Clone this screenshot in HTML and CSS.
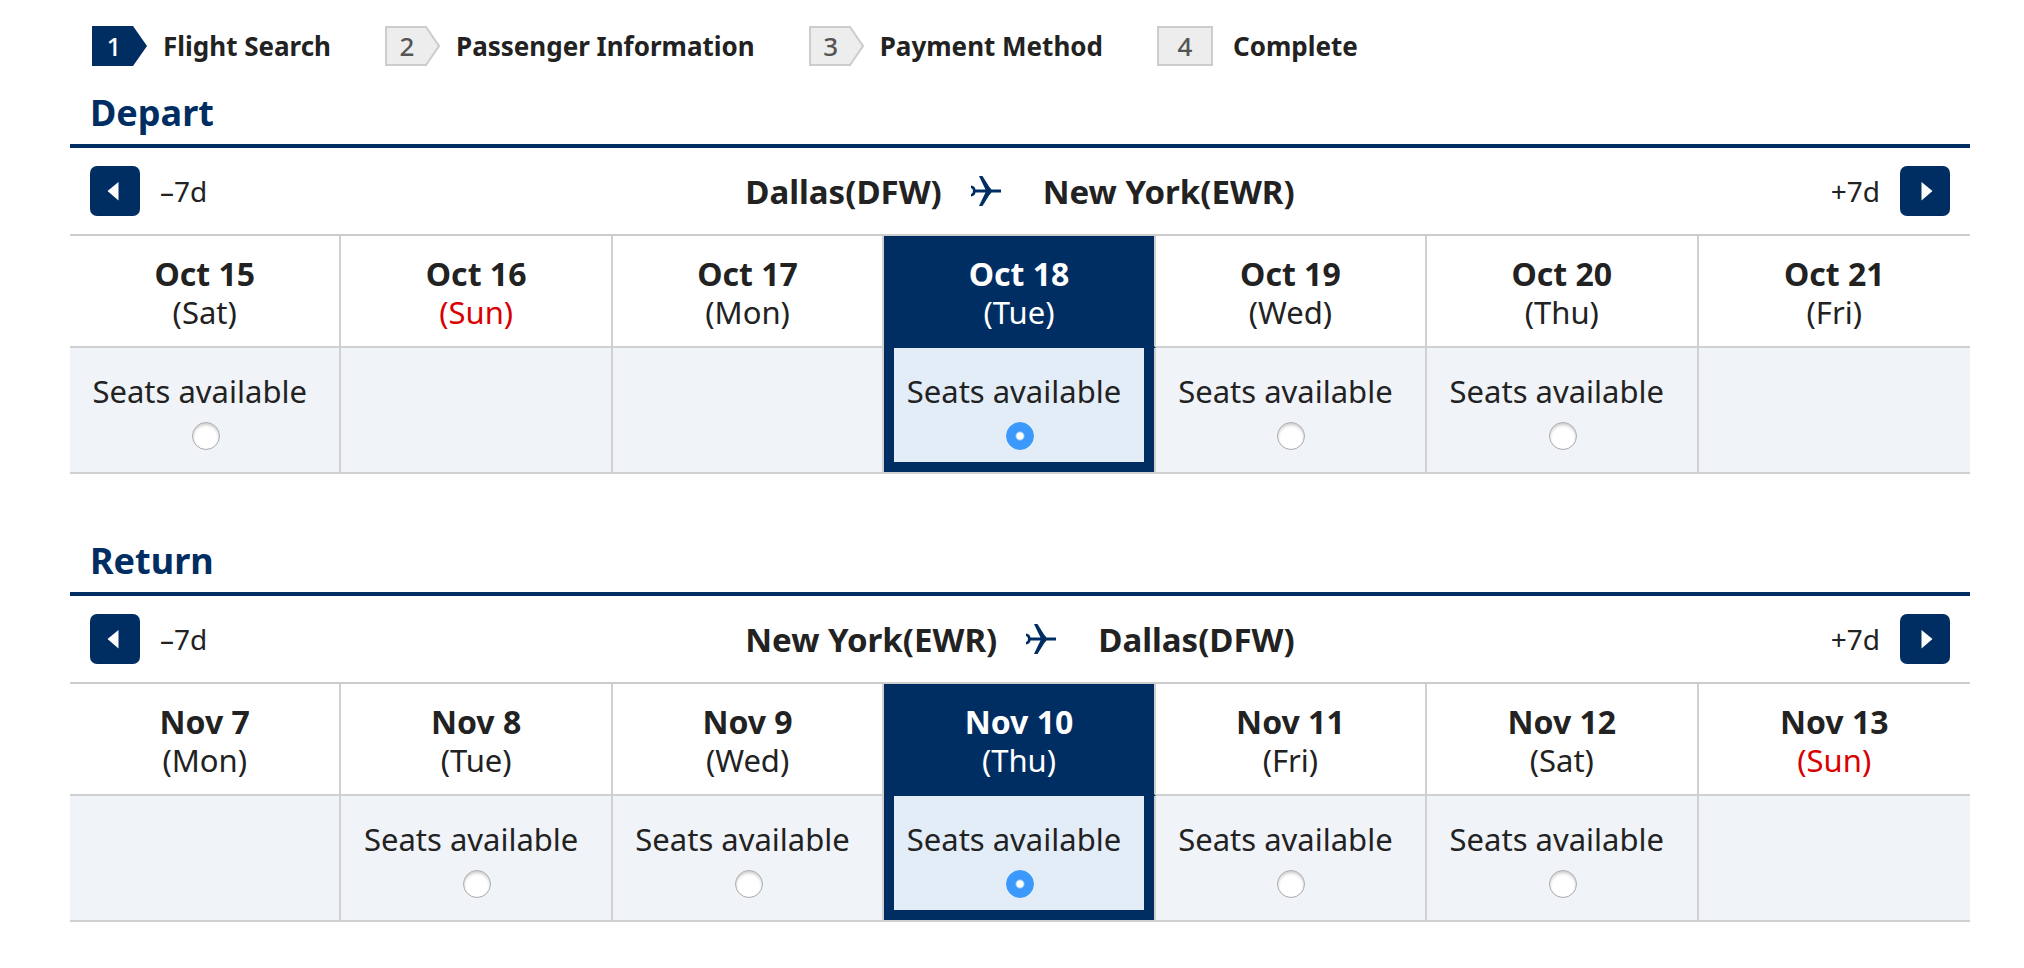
FILE: index.html
```
<!DOCTYPE html>
<html lang="en">
<head>
<meta charset="utf-8">
<title>Flight Search</title>
<link rel="stylesheet" href="styles.css">
</head>
<body>
<svg width="0" height="0" class="defs" aria-hidden="true">
  <symbol id="plane" viewBox="0 0 30 30">
    <path d="M8 0h3.500L18 10.500l2.500 3H30v3h-9.500L18 19.500 11.500 30H8l5-10.500 1.500-3H4.500Q4 20 0 20.500V18Q2 17.500 2 15T0 12V9.500Q4 10 4.500 13.500h10L13 10.500z"/>
  </symbol>
  <symbol id="arrow" viewBox="0 0 50 50"><path d="M17.500 25 28.500 16v18.500z"/></symbol>
</svg>
<main class="page">
  <ol class="steps">
    <li class="step step-current"><span class="badge"><svg viewBox="0 0 56 40"><path d="M0 0H41L55 20 41 40H0z"/></svg><b>1</b></span>Flight Search</li>
    <li class="step"><span class="badge"><svg viewBox="0 0 56 40"><path d="M1 1H41L54 20 41 39H1z"/></svg><b>2</b></span>Passenger Information</li>
    <li class="step"><span class="badge"><svg viewBox="0 0 56 40"><path d="M1 1H41L54 20 41 39H1z"/></svg><b>3</b></span>Payment Method</li>
    <li class="step step-last"><span class="badge"><svg viewBox="0 0 56 40"><path d="M1 1H55V39H1z"/></svg><b>4</b></span>Complete</li>
  </ol>

  <section class="leg">
    <h2 class="leg-title">Depart</h2>
    <div class="leg-nav">
      <div class="shift"><button class="shift-btn" id="dp" aria-label="Previous 7 days"><svg><use href="#arrow"/></svg></button><label for="dp">–7d</label></div>
      <div class="route"><span>Dallas(DFW)</span><svg class="plane"><use href="#plane"/></svg><span>New York(EWR)</span></div>
      <div class="shift shift-next"><label for="dn">+7d</label><button class="shift-btn" id="dn" aria-label="Next 7 days"><svg><use href="#arrow"/></svg></button></div>
    </div>
    <table class="days">
      <thead><tr>
        <th>Oct 15<span class="dow">(Sat)</span></th>
        <th>Oct 16<span class="dow sunday">(Sun)</span></th>
        <th>Oct 17<span class="dow">(Mon)</span></th>
        <th class="selected">Oct 18<span class="dow">(Tue)</span></th>
        <th>Oct 19<span class="dow">(Wed)</span></th>
        <th>Oct 20<span class="dow">(Thu)</span></th>
        <th>Oct 21<span class="dow">(Fri)</span></th>
      </tr></thead>
      <tbody><tr>
        <td><label class="seat"><span>Seats available</span><input type="radio" name="depart"></label></td>
        <td></td>
        <td></td>
        <td class="selected"><label class="seat"><span>Seats available</span><input type="radio" name="depart" checked></label></td>
        <td><label class="seat"><span>Seats available</span><input type="radio" name="depart"></label></td>
        <td><label class="seat"><span>Seats available</span><input type="radio" name="depart"></label></td>
        <td></td>
      </tr></tbody>
    </table>
  </section>

  <section class="leg">
    <h2 class="leg-title">Return</h2>
    <div class="leg-nav">
      <div class="shift"><button class="shift-btn" id="rp" aria-label="Previous 7 days"><svg><use href="#arrow"/></svg></button><label for="rp">–7d</label></div>
      <div class="route"><span>New York(EWR)</span><svg class="plane"><use href="#plane"/></svg><span>Dallas(DFW)</span></div>
      <div class="shift shift-next"><label for="rn">+7d</label><button class="shift-btn" id="rn" aria-label="Next 7 days"><svg><use href="#arrow"/></svg></button></div>
    </div>
    <table class="days">
      <thead><tr>
        <th>Nov 7<span class="dow">(Mon)</span></th>
        <th>Nov 8<span class="dow">(Tue)</span></th>
        <th>Nov 9<span class="dow">(Wed)</span></th>
        <th class="selected">Nov 10<span class="dow">(Thu)</span></th>
        <th>Nov 11<span class="dow">(Fri)</span></th>
        <th>Nov 12<span class="dow">(Sat)</span></th>
        <th>Nov 13<span class="dow sunday">(Sun)</span></th>
      </tr></thead>
      <tbody><tr>
        <td></td>
        <td><label class="seat"><span>Seats available</span><input type="radio" name="return"></label></td>
        <td><label class="seat"><span>Seats available</span><input type="radio" name="return"></label></td>
        <td class="selected"><label class="seat"><span>Seats available</span><input type="radio" name="return" checked></label></td>
        <td><label class="seat"><span>Seats available</span><input type="radio" name="return"></label></td>
        <td><label class="seat"><span>Seats available</span><input type="radio" name="return"></label></td>
        <td></td>
      </tr></tbody>
    </table>
  </section>
</main>
</body>
</html>
```
FILE: styles.css
```
* { box-sizing: border-box; }
body {
  margin: 0;
  background: #fff;
  color: #222;
  font-family: "Noto Sans", "Open Sans", sans-serif;
}
.defs { position: absolute; }
.page { padding: 26px 54px 0 70px; }

.steps {
  display: flex;
  gap: 54px;
  height: 40px;
  margin: 0;
  padding: 0 22px;
  list-style: none;
}
.step {
  display: flex;
  align-items: center;
  gap: 15px;
  font-size: 26px;
  font-weight: 700;
  white-space: nowrap;
}
.step-last { gap: 20px; }
.badge {
  position: relative;
  width: 56px;
  height: 40px;
}
.badge svg {
  display: block;
  width: 56px;
  height: 40px;
  fill: #ededed;
  stroke: #ccc;
  stroke-width: 2;
}
.badge b {
  position: absolute;
  inset: 0 12px 0 0;
  color: #555;
  font-size: 26px;
  font-weight: 500;
  line-height: 40px;
  text-align: center;
}
.step-last .badge b { right: 0; }
.step-current .badge svg { fill: #002e62; stroke: none; }
.step-current .badge b { color: #fff; }

.leg { margin-bottom: 40px; }
.leg-title {
  margin: 0;
  padding: 22px 20px 6px;
  border-bottom: 4px solid #002e62;
  color: #002e62;
  font-size: 36px;
  line-height: 50px;
}
.leg-nav {
  display: grid;
  grid-template-columns: 1fr auto 1fr;
  align-items: center;
  height: 88px;
  padding: 0 20px;
  border-bottom: 2px solid #ccc;
}
.shift {
  display: flex;
  align-items: center;
  gap: 20px;
  font-size: 28px;
}
.shift-next { justify-content: flex-end; }
.shift-btn {
  width: 50px;
  height: 50px;
  padding: 0;
  border: 0;
  border-radius: 7px;
  background: #002e62;
}
.shift-btn svg { display: block; width: 50px; height: 50px; fill: #fff; }
.shift-next svg { transform: scaleX(-1); }
.route {
  display: flex;
  align-items: center;
  font-size: 33px;
  font-weight: 700;
}
.plane {
  width: 30px;
  height: 30px;
  margin: 0 42px 0 29px;
  fill: #002e62;
}

.days {
  width: 100%;
  table-layout: fixed;
  border-collapse: separate;
  border-spacing: 0;
}
.days th,
.days td {
  padding: 0;
  border-right: 2px solid #d0d0d0;
  border-bottom: 2px solid #d0d0d0;
}
.days th:last-child,
.days td:last-child { border-right: 0; }
.days th {
  height: 112px;
  padding-top: 4px;
  font-size: 32px;
  line-height: 38px;
}
.dow { display: block; font-size: 31px; font-weight: 400; }
.sunday { color: #d90000; }
.days td {
  height: 126px;
  padding: 2px 0 0 2px;
  background: #f0f3f8;
  font-size: 31px;
  line-height: 38px;
}
.days th.selected {
  border-bottom-color: #002e62;
  background: #002e62;
  color: #fff;
}
.days td.selected {
  background: #e3edf8;
  box-shadow: inset 10px 0 #002e62, inset -10px -10px #002e62;
}
.seat {
  display: flex;
  flex-direction: column;
  align-items: center;
  gap: 12px;
}
.seat span { padding-right: 12px; white-space: nowrap; }
.seat input {
  appearance: none;
  width: 28px;
  height: 28px;
  margin: 0;
  border: 1px solid #aaa;
  border-radius: 50%;
  background: #fff;
  box-shadow: inset 0 2px 3px #ccc;
}
.seat input:checked {
  border-color: #3b99fc;
  background: radial-gradient(circle, #fff 3px, #3b99fc 5px);
  box-shadow: none;
}
```
